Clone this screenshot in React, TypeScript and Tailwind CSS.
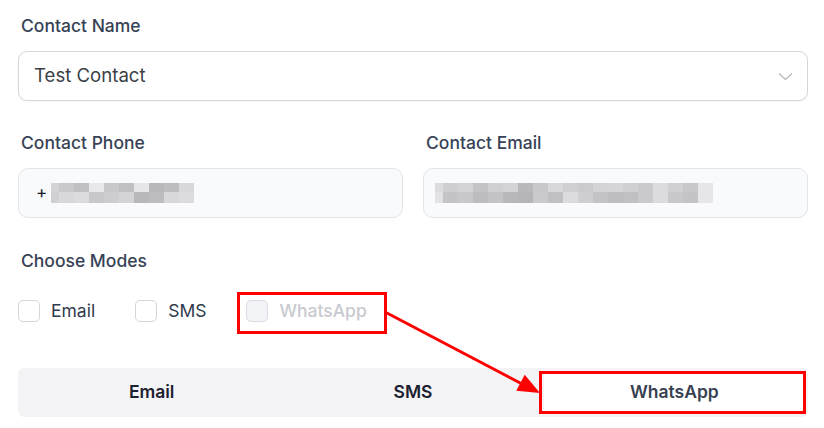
import React from "react";

const phoneTop = ["#d4d4d8", "#c9c9cd", "#c0c0c4", "#e8e8ea", "#c8c8cc", "#c0c0c4", "#e6e6e8", "#b8b8bc", "#bdbdc1", "#d8d8dc"];
const phoneBot = ["#d0d0d4", "#d8d8dc", "#dcdcdf", "#c8c8cc", "#cdcdd1", "#d4d4d8", "#b8b8bc", "#bcbcc0", "#d8d8dc", "#dcdcdf"];
const mailTop = ["#dcdce0", "#cfcfd3", "#d4d4d8", "#c4c4c8", "#d0d0d4", "#d4d4d8", "#b8b8bd", "#c8c8cc", "#d8d8dc", "#d0d0d4", "#cbcbcf", "#d4d4d8", "#d6d6da", "#d0d0d4", "#cacace", "#dcdce0", "#d0d0d4", "#c8c8cc", "#e6e6e8"];
const mailBot = ["#e2e2e5", "#c4c4c8", "#c8c8cc", "#bcbcc0", "#c4c4c8", "#b8b8bc", "#b4b4b9", "#cacace", "#c0c0c4", "#dcdce0", "#cfcfd3", "#c4c4c8", "#bebec2", "#c0c0c4", "#cacace", "#dcdce0", "#c8c8cc", "#c4c4c8", "#e6e6e8"];

function Pixels({ top, bot, first }: { top: string[]; bot: string[]; first: number }) {
  const widths = top.map((_, i) => (i === 0 ? first : 15));
  return (
    <div className="flex flex-col">
      <div className="flex h-[9px]">
        {top.map((c, i) => (
          <div key={i} style={{ background: c, width: widths[i] }} />
        ))}
      </div>
      <div className="flex h-[11px]">
        {bot.map((c, i) => (
          <div key={i} style={{ background: c, width: widths[i] }} />
        ))}
      </div>
    </div>
  );
}

function Checkbox({ label, disabled }: { label: string; disabled?: boolean }) {
  return (
    <div className="flex items-center gap-[11px]">
      <div
        className={
          disabled
            ? "h-[22px] w-[22px] rounded-[5px] border border-[#dcdde3] bg-[#f3f4f7]"
            : "h-[22px] w-[22px] rounded-[5px] border border-[#d4d6dc] bg-white"
        }
      />
      <span className={disabled ? "text-[17.5px] font-medium text-[#c8cad0]" : "text-[17.5px] text-[#2f3a4c]"}>{label}</span>
    </div>
  );
}

export default function App() {
  return (
    <div
      className="relative h-[428px] w-[824px] overflow-hidden bg-white pl-[18px] pr-[16px] pt-[14px]"
      style={{ fontFamily: "Inter, 'Noto Sans', sans-serif" }}
    >
      <div className="pl-[3px] text-[17.5px] leading-[24px] font-medium text-[#374256]">Contact Name</div>
      <div className="mt-[13px] flex h-[50px] items-center justify-between rounded-[9px] border border-[#d4d6de] bg-white pl-[15px] pr-[14px] shadow-[0_1px_2px_rgba(0,0,0,0.04)]">
        <span className="text-[18.6px] text-[#3b3f47]">Test Contact</span>
        <svg width="15" height="9" viewBox="0 0 15 9" fill="none">
          <polyline points="1,1.5 7.5,7.5 14,1.5" stroke="#b4b6bc" strokeWidth="1.2" />
        </svg>
      </div>

      <div className="mt-[30px] grid grid-cols-2 gap-x-[20px]">
        <div>
          <div className="pl-[3px] text-[17.5px] leading-[24px] font-medium text-[#374256]">Contact Phone</div>
          <div className="mt-[13px] flex h-[50px] items-center rounded-[10px] border border-[#e4e5eb] bg-[#f9fafb] pl-[17px]">
            <span className="mr-[4px] text-[17px] text-[#111827]">+</span>
            <Pixels top={phoneTop} bot={phoneBot} first={8} />
          </div>
        </div>
        <div>
          <div className="pl-[3px] text-[17.5px] leading-[24px] font-medium text-[#374256]">Contact Email</div>
          <div className="mt-[13px] flex h-[50px] items-center rounded-[10px] border border-[#e4e5eb] bg-[#f9fafb] pl-[11px]">
            <Pixels top={mailTop} bot={mailBot} first={8} />
          </div>
        </div>
      </div>

      <div className="mt-[31px] pl-[3px] text-[17.5px] leading-[24px] font-medium text-[#374256]">Choose Modes</div>
      <div className="mt-[27px] flex h-[22px] items-center gap-x-[40px]">
        <Checkbox label="Email" />
        <Checkbox label="SMS" />
        <Checkbox label="WhatsApp" disabled />
      </div>

      <div className="mt-[46px] grid h-[49px] grid-cols-3 rounded-[6px] bg-[#f4f4f6] p-[3px]">
        <div className="flex items-center justify-center text-[17.5px] font-semibold text-[#1c2130]">Email</div>
        <div className="flex items-center justify-center text-[17.5px] font-semibold text-[#1c2130]">SMS</div>
        <div className="flex items-center justify-center rounded-[4px] bg-white text-[17.5px] font-semibold text-[#374151]">
          WhatsApp
        </div>
      </div>

      {/* annotations */}
      <div className="pointer-events-none absolute left-[237px] top-[292px] h-[42px] w-[150px] border-[3px] border-[#ff0000]" />
      <div className="pointer-events-none absolute left-[539px] top-[371px] h-[43px] w-[267px] border-[3px] border-[#ff0000]" />
      <svg className="pointer-events-none absolute left-0 top-0" width="824" height="428">
        <line x1="386" y1="312.5" x2="524" y2="385" stroke="#ff0000" strokeWidth="3" />
        <polygon points="540,393 516.3,390.8 524.7,374.8" fill="#ff0000" />
      </svg>
    </div>
  );
}
